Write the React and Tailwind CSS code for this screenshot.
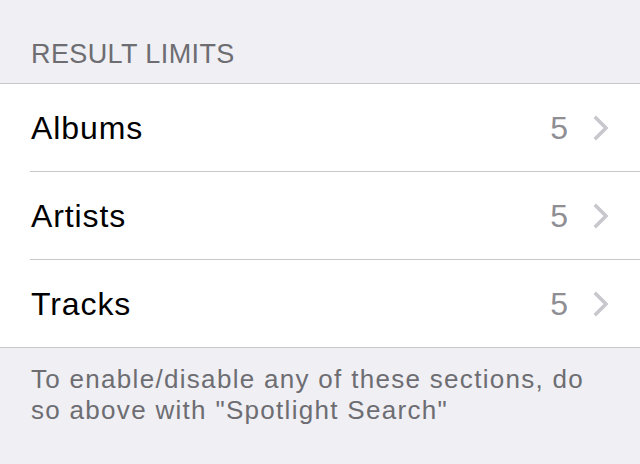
import React from 'react';

const rows = [
  { label: 'Albums', value: 5 },
  { label: 'Artists', value: 5 },
  { label: 'Tracks', value: 5 },
];

const Chevron = () => (
  <svg width="17" height="26" viewBox="0 0 17 26" fill="none">
    <path d="M3 3 L13 13 L3 23" stroke="#c7c7cc" strokeWidth="3.5" strokeLinecap="square" />
  </svg>
);

const App = () => {
  return (
    <div className="w-[640px] h-[464px] bg-[#efeff4] font-['Liberation_Sans',Arial,sans-serif] overflow-hidden">
      <div className="h-[83px] px-[31px] pt-[38px] text-[27px] leading-[32px] tracking-[0.4px] text-[#6d6d72]">RESULT LIMITS</div>
      <div className="bg-white border-y border-[#c8c7cc]">
        {rows.map((row, i) => (
          <div key={row.label} className="pl-[30px]">
            <div className={`flex items-center pr-[30px] ${i < rows.length - 1 ? 'border-b border-[#c8c7cc] h-[88px]' : 'h-[87px]'}`}>
              <span className="flex-1 pl-[1px] text-[32px] tracking-[0.9px] text-black">{row.label}</span>
              <span className="text-[32px] text-[#8e8e93] mr-[25px]">{row.value}</span>
              <Chevron />
            </div>
          </div>
        ))}
      </div>
      <p className="pl-[31px] pr-[40px] pt-[16px] text-[26px] leading-[31px] tracking-[1.3px] text-[#6d6d72]">
        To enable/disable any of these sections, do so above with "Spotlight Search"
      </p>
    </div>
  );
};

export default App;
